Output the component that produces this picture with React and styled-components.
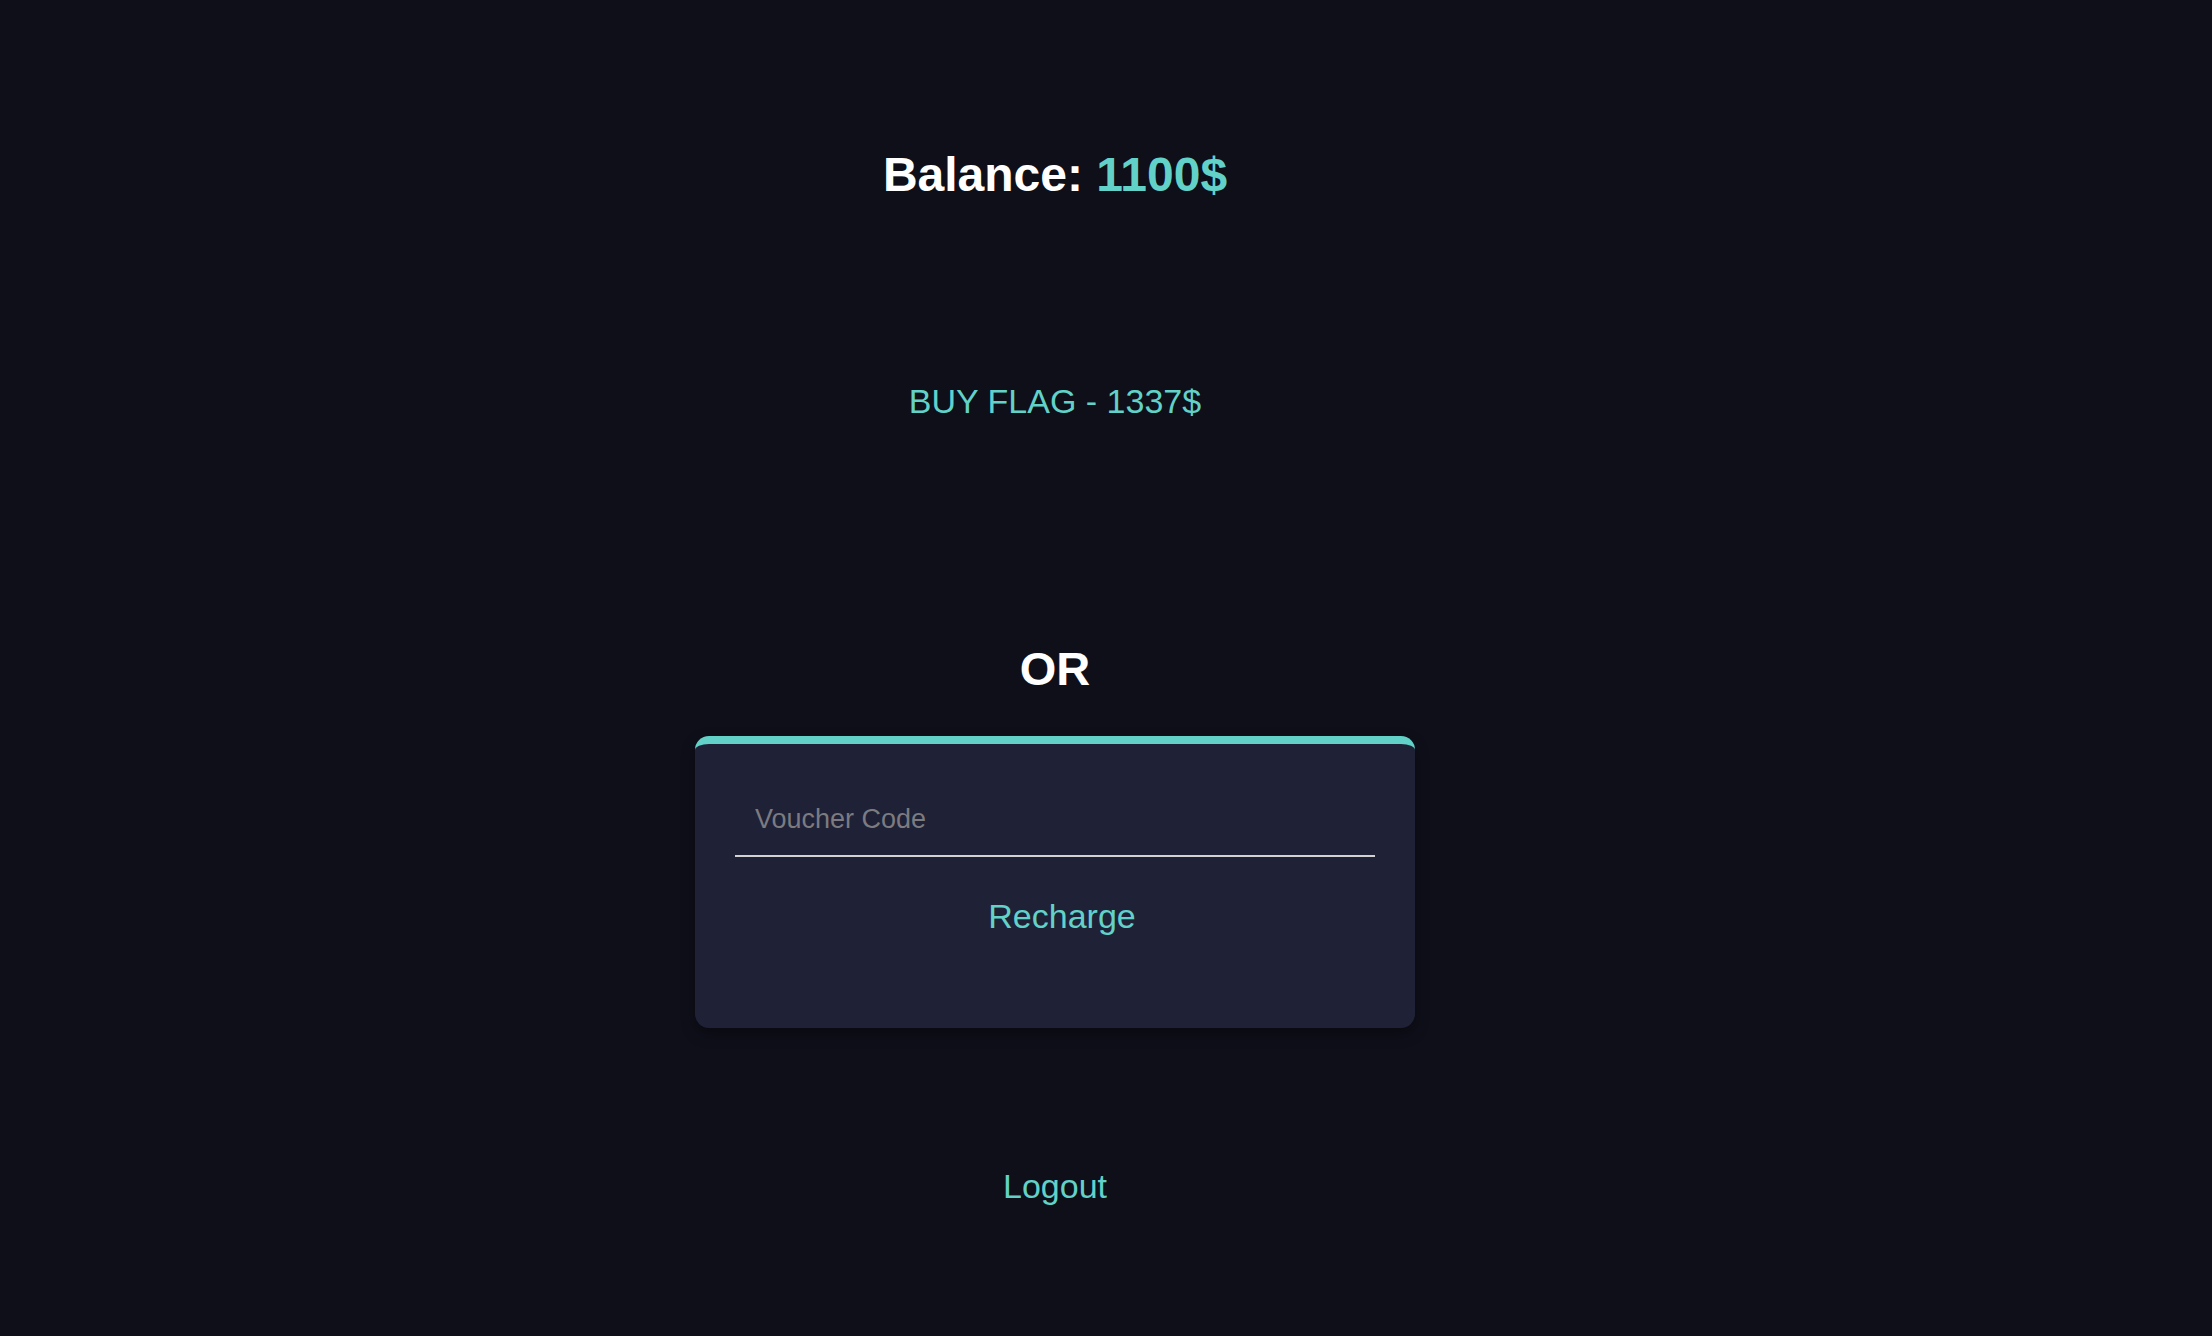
import React from "react";
import styled, { createGlobalStyle } from "styled-components";

const Global = createGlobalStyle`
  html, body {
    margin: 0;
    padding: 0;
    background: #0e0f19;
    font-family: "Liberation Sans", Arial, Helvetica, sans-serif;
  }
  * { box-sizing: border-box; }
`;

const Page = styled.main`
  width: calc(100% - 102px);
  min-height: 1336px;
  display: flex;
  flex-direction: column;
  align-items: center;
  background: #0e0f19;
`;

const Balance = styled.h1`
  margin: 151px 0 0;
  font-size: 48px;
  line-height: 48px;
  font-weight: 700;
  color: #ffffff;
`;

const Amount = styled.span`
  color: #62d1c8;
`;

const LinkButton = styled.a`
  display: block;
  margin-top: ${(p) => p.$mt}px;
  font-size: ${(p) => p.$size}px;
  line-height: ${(p) => p.$size}px;
  color: #62d1c8;
  text-decoration: none;
  cursor: pointer;
`;

const Or = styled.h2`
  margin: 227px 0 0;
  font-size: 47px;
  line-height: 47px;
  font-weight: 700;
  color: #ffffff;
`;

const Card = styled.form`
  margin-top: 44px;
  width: 720px;
  height: 292px;
  padding: 53px 40px 0;
  background: #1f2137;
  border-top: 8px solid #62d1c8;
  border-radius: 14px;
  box-shadow: 0 6px 14px rgba(0, 0, 0, 0.35);
  display: flex;
  flex-direction: column;
  align-items: center;
`;

const Input = styled.input`
  width: 100%;
  height: 60px;
  padding: 0 20px 14px;
  background: transparent;
  border: none;
  border-bottom: 2px solid #d2d2d2;
  outline: none;
  color: #ffffff;
  font-family: inherit;
  font-size: 27px;
  &::placeholder {
    color: #7b7b80;
  }
`;

const Submit = styled.button`
  margin: 42px 0 0 14px;
  padding: 0;
  background: transparent;
  border: none;
  font-family: inherit;
  font-size: 34px;
  line-height: 34px;
  color: #62d1c8;
  cursor: pointer;
`;

export default function App() {
  return (
    <>
      <Global />
      <Page>
        <Balance>
          Balance: <Amount>1100$</Amount>
        </Balance>
        <LinkButton $mt={185} $size={34}>BUY FLAG - 1337$</LinkButton>
        <Or>OR</Or>
        <Card onSubmit={(e) => e.preventDefault()}>
          <Input type="text" placeholder="Voucher Code" />
          <Submit type="submit">Recharge</Submit>
        </Card>
        <LinkButton $mt={141} $size={34}>Logout</LinkButton>
      </Page>
    </>
  );
}
